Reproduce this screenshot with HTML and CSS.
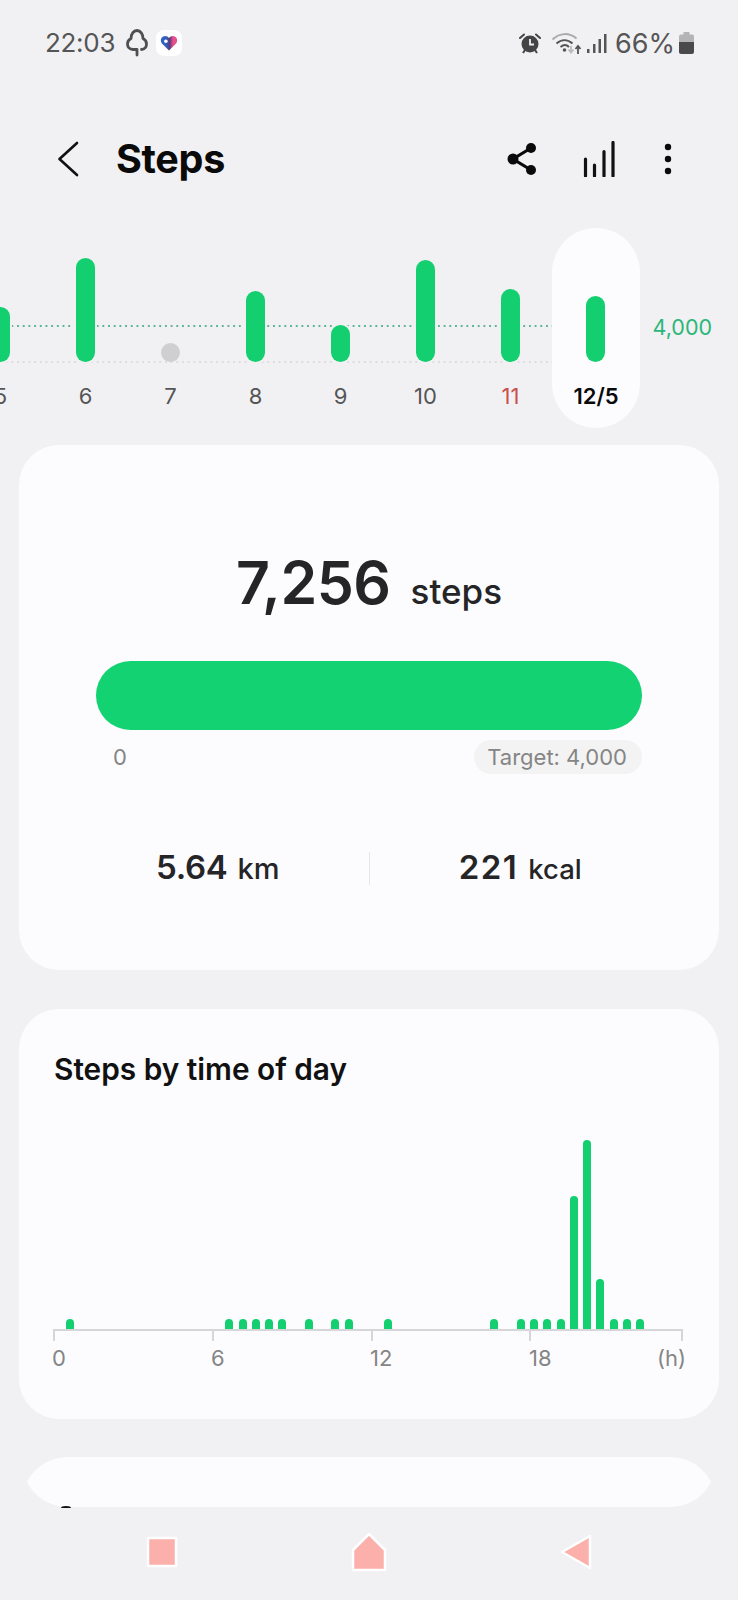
FILE: index.html
```html
<!DOCTYPE html>
<html lang="en">
<head>
<meta charset="utf-8">
<title>Steps</title>
<link rel="stylesheet" href="styles.css">
</head>
<body>
<div class="screen">
  <div class="status">
    <span class="clock">22:03</span>
    <svg class="ico-tree" width="22" height="28" viewBox="0 0 22 28" fill="none" stroke="#4f4f51" stroke-width="2.800" stroke-linecap="round" stroke-linejoin="round"><path d="M11 26V20.500H7C3.500 20.500 1.500 18 1.500 15 1.500 12.500 3 10.500 5 9.500 5 5 7.500 1.500 11 1.500S17 5 17 9.500C19 10.500 20.500 12.500 20.500 15 20.500 18 18.500 20.500 15.500 20.500"/></svg>
    <span class="app-badge">
      <svg width="18" height="16" viewBox="0 0 20 18"><defs><linearGradient id="hg" x1="0" y1="0" x2="1" y2="0"><stop offset="0.3" stop-color="#2f62c4"/><stop offset="0.55" stop-color="#5b3a78"/><stop offset="0.75" stop-color="#e8508c"/></linearGradient></defs><path d="M10 17.500 2 9.500C-.5 6.500 1 1 5.500 1 7.500 1 9 2 10 3.500 11 2 12.500 1 14.500 1 19 1 20.500 6.500 18 9.500Z" fill="url(#hg)"/><circle cx="6.500" cy="7" r="2" fill="#fff"/></svg>
    </span>
    <span class="status-right">
      <svg width="22" height="21" viewBox="0 0 22 21"><path d="M1 5 5 1.500M21 5l-4-3.500" stroke="#444" stroke-width="2" stroke-linecap="round"/><path d="M4 20l2-3M18 20l-2-3" stroke="#444" stroke-width="2"/><circle cx="11" cy="11" r="8.500" fill="#444"/><path d="M11 6v5.500h4" fill="none" stroke="#f1f1f3" stroke-width="1.800"/></svg>
      <svg class="ico-wifi" width="31" height="23" viewBox="0 0 31 23" fill="none"><path d="M1.500 7.500C9 .5 18 .5 25.500 6.500" stroke="#aaa" stroke-width="2"/><path d="M5.500 11.500c5-4.500 11-4.500 16 0M9.500 15c3-2.500 6-2.500 8.500 0" stroke="#555" stroke-width="2"/><circle cx="13.500" cy="18" r="1.800" fill="#555"/><path d="M20 14v6M17.500 17.500l2.500 3 2.500-3" stroke="#bbb" stroke-width="1.800"/><path d="M27 22v-7M24.500 17l2.500-3 2.500 3" stroke="#555" stroke-width="1.800"/></svg>
      <svg class="ico-signal" width="20" height="21" viewBox="0 0 20 21" fill="#555"><rect x="0" y="16" width="2.500" height="4"/><rect x="6" y="11" width="2.500" height="9"/><rect x="11.500" y="6" width="2.500" height="14"/><rect x="17" y="1" width="2.500" height="19"/></svg>
      <span class="batt-text">66%</span>
      <svg class="ico-batt" width="15" height="22" viewBox="0 0 15 22"><path d="M4.500 0h6v2.500h2.500a2 2 0 0 1 2 2V10H0V4.500a2 2 0 0 1 2-2h2.500Z" fill="#b4b4b6"/><path d="M0 10h15v10a2 2 0 0 1-2 2H2a2 2 0 0 1-2-2Z" fill="#4a4a4c"/></svg>
    </span>
  </div>

  <header class="appbar">
    <svg class="ico-back" width="22" height="36" viewBox="0 0 22 36" fill="none" stroke="#111" stroke-width="2.600" stroke-linecap="round" stroke-linejoin="round"><path d="M20 2 2.500 18 20 34"/></svg>
    <h1 class="title">Steps</h1>
    <span class="actions">
      <svg class="ico-share" width="30" height="34" viewBox="0 0 30 34" fill="none"><path d="M24 6 6 17l18 11" stroke="#0a0a0a" stroke-width="3.200"/><circle cx="24" cy="6" r="5" fill="#0a0a0a"/><circle cx="6" cy="17" r="5.500" fill="#0a0a0a"/><circle cx="24" cy="28" r="5" fill="#0a0a0a"/></svg>
      <svg class="ico-stats" width="32" height="36" viewBox="0 0 32 36" stroke="#111" stroke-width="3.200" stroke-linecap="round"><path d="M2.500 35V18M11.500 35V24M21 35V10.500M30 35V1.500"/></svg>
      <svg class="ico-more" width="8" height="32" viewBox="0 0 8 32" fill="#0a0a0a"><circle cx="4" cy="4" r="3.200"/><circle cx="4" cy="16" r="3.200"/><circle cx="4" cy="28" r="3.200"/></svg>
    </span>
  </header>

  <section class="week">
    <div class="line line-goal"></div>
    <div class="line line-zero"></div>
    <div class="days">
      <div class="day"><div class="slot"><span class="pill-bar" style="height:55px"></span></div><span class="day-label">5</span></div>
      <div class="day"><div class="slot"><span class="pill-bar" style="height:104px"></span></div><span class="day-label">6</span></div>
      <div class="day"><div class="slot"><span class="dot-bar"></span></div><span class="day-label">7</span></div>
      <div class="day"><div class="slot"><span class="pill-bar" style="height:71px"></span></div><span class="day-label">8</span></div>
      <div class="day"><div class="slot"><span class="pill-bar" style="height:37px"></span></div><span class="day-label">9</span></div>
      <div class="day"><div class="slot"><span class="pill-bar" style="height:102px"></span></div><span class="day-label">10</span></div>
      <div class="day"><div class="slot"><span class="pill-bar" style="height:73px"></span></div><span class="day-label day-sun">11</span></div>
      <div class="day day-now"><div class="slot"><span class="pill-bar" style="height:66px"></span></div><span class="day-label day-label-now">12/5</span></div>
    </div>
    <span class="goal-label">4,000</span>
  </section>

  <section class="card card-summary">
    <div class="total"><span class="total-num">7,256</span><span class="total-unit">steps</span></div>
    <div class="progress"></div>
    <div class="scale"><span class="scale-zero">0</span><span class="target">Target: 4,000</span></div>
    <div class="stats">
      <div class="stat"><span class="stat-num">5.64</span><span class="stat-unit">km</span></div>
      <div class="stat-sep"></div>
      <div class="stat stat-kcal"><span class="stat-num">221</span><span class="stat-unit">kcal</span></div>
    </div>
  </section>

  <section class="card card-hours">
    <h2 class="card-title">Steps by time of day</h2>
    <div class="plot">
      <span class="hbar" style="grid-column:1;height:10px"></span>
      <span class="hbar" style="grid-column:13;height:10px"></span>
      <span class="hbar" style="grid-column:14;height:10px"></span>
      <span class="hbar" style="grid-column:15;height:10px"></span>
      <span class="hbar" style="grid-column:16;height:10px"></span>
      <span class="hbar" style="grid-column:17;height:10px"></span>
      <span class="hbar" style="grid-column:19;height:10px"></span>
      <span class="hbar" style="grid-column:21;height:10px"></span>
      <span class="hbar" style="grid-column:22;height:10px"></span>
      <span class="hbar" style="grid-column:25;height:10px"></span>
      <span class="hbar" style="grid-column:33;height:10px"></span>
      <span class="hbar" style="grid-column:35;height:10px"></span>
      <span class="hbar" style="grid-column:36;height:10px"></span>
      <span class="hbar" style="grid-column:37;height:10px"></span>
      <span class="hbar" style="grid-column:38;height:10px"></span>
      <span class="hbar" style="grid-column:39;height:133px"></span>
      <span class="hbar" style="grid-column:40;height:189px"></span>
      <span class="hbar" style="grid-column:41;height:50px"></span>
      <span class="hbar" style="grid-column:42;height:10px"></span>
      <span class="hbar" style="grid-column:43;height:10px"></span>
      <span class="hbar" style="grid-column:44;height:10px"></span>
    </div>
    <div class="axis">
      <span class="tick tick-shift">0</span>
      <span class="tick tick-shift">6</span>
      <span class="tick tick-shift">12</span>
      <span class="tick tick-last"><span>18</span><span class="tick-unit">(h)</span></span>
    </div>
  </section>

  <section class="card-peek"><span class="peek-arc"></span></section>

  <nav class="navbar">
    <span class="nav-item"><svg width="32" height="32" viewBox="0 0 32 32"><rect x="2" y="2" width="28" height="28" fill="#fbb0ab" stroke="#fff" stroke-width="2.500" stroke-linejoin="round"/></svg></span>
    <span class="nav-item"><svg width="36" height="40" viewBox="0 0 36 40"><path d="M18 2 34 18V38H2V18Z" fill="#fbb0ab" stroke="#fff" stroke-width="2.500" stroke-linejoin="round"/></svg></span>
    <span class="nav-item"><svg width="34" height="36" viewBox="0 0 34 36"><path d="M31 2V34L3 18Z" fill="#fbb0ab" stroke="#fff" stroke-width="2.500" stroke-linejoin="round"/></svg></span>
  </nav>
</div>
</body>
</html>
```

FILE: styles.css
```css
* { box-sizing: border-box; }
html, body { margin: 0; padding: 0; }
body { background: #f1f1f3; font-family: Inter, "Noto Sans", "Liberation Sans", sans-serif; }
h1, h2 { margin: 0; }

.screen { width: 738px; height: 1600px; overflow: hidden; display: flex; flex-direction: column; background: #f1f1f3; }

.status { height: 86px; flex: none; display: flex; align-items: center; padding: 0 44px 0 45px; color: #555; }
.clock { font-size: 26px; letter-spacing: -0.3px; line-height: 30px; padding-bottom: 1px; }
.ico-tree { margin-left: 11px; }
.app-badge { width: 26px; height: 26px; margin-left: 8px; border-radius: 8px; background: #fff; display: flex; align-items: center; justify-content: center; }
.status-right { margin-left: auto; display: flex; align-items: center; }
.ico-wifi { margin-left: 10px; }
.ico-signal { margin-left: 5px; }
.batt-text { font-size: 27px; margin-left: 8px; }
.ico-batt { margin-left: 4px; }

.appbar { height: 142px; flex: none; display: flex; align-items: center; padding: 3px 0 0 57px; }
.title { font-size: 39.5px; font-weight: 700; color: #0a0a0a; margin-left: 37px; letter-spacing: -0.3px; }
.actions { margin-left: auto; display: flex; align-items: center; padding-right: 66px; }
.ico-stats { margin-left: 46px; }
.ico-more { margin-left: 49px; }

.week { position: relative; height: 200px; flex: none; display: flex; overflow: hidden; }
.line { position: absolute; left: 0; width: 552px; height: 2px; background-size: 5.7px 2px; background-repeat: repeat-x; }
.line-goal { top: 97px; background-image: linear-gradient(90deg, #5cb592 2px, transparent 2px); }
.line-zero { top: 133px; background-image: linear-gradient(90deg, #dcdcde 2px, transparent 2px); }
.days { position: relative; display: flex; margin-left: -42.5px; }
.day { width: 85px; display: flex; flex-direction: column; align-items: center; }
.slot { height: 134px; display: flex; align-items: flex-end; }
.pill-bar { display: block; width: 19px; border-radius: 10px; background: #13cf6f; box-shadow: 0 0 0 2px #f1f1f3; }
.dot-bar { display: block; width: 19px; height: 19px; border-radius: 50%; background: #cfcfd1; }
.day-label { margin-top: 21px; padding-left: 1px; font-size: 22px; line-height: 26px; color: #555; }
.day-sun { color: #c9504d; }
.day-now { width: 88px; margin-left: -1px; height: 200px; border-radius: 44px; background: #fcfcfe; }
.day-now .pill-bar { box-shadow: none; }
.day-label-now { color: #0a0a0a; font-weight: 600; }
.goal-label { margin: 86px 0 0 13px; font-size: 21.5px; line-height: 26px; color: #2cb67a; }

.card { flex: none; margin: 0 19px; background: #fcfcfe; border-radius: 40px; }

.card-summary { height: 525px; margin-top: 17px; padding: 100px 77px 0; }
.total { height: 76px; display: flex; align-items: baseline; justify-content: center; color: #252527; line-height: 76px; }
.total-num { font-size: 59px; font-weight: 600; letter-spacing: -0.5px; }
.total-unit { font-size: 35px; font-weight: 500; margin-left: 20px; }
.progress { height: 69px; margin-top: 40px; border-radius: 35px; background: #13d272; }
.scale { height: 34px; margin-top: 10px; display: flex; align-items: center; justify-content: space-between; padding: 0 0 0 17px; font-size: 22px; color: #858585; }
.target { height: 34px; display: flex; align-items: center; padding: 0 15px 0 13px; border-radius: 17px; background: #f3f3f4; }
.stats { margin: 78px -29px 0; height: 31px; display: grid; grid-template-columns: 1fr 1px 1fr; }
.stat { display: flex; align-items: baseline; justify-content: center; color: #252527; line-height: 31px; }
.stat-num { font-size: 33px; font-weight: 600; letter-spacing: -0.3px; }
.stat-unit { font-size: 29px; font-weight: 500; margin-left: 10px; }
.stat-kcal .stat-num { letter-spacing: 1.5px; }
.stat-kcal .stat-unit { font-size: 27.5px; }
.stat-sep { background: #e6e6e8; }

.card-hours { height: 410px; margin-top: 39px; padding: 40px 0 0 34px; }
.card-title { font-size: 29.8px; line-height: 40px; font-weight: 600; color: #111; margin-left: 1px; }
.plot { height: 189px; margin-top: 51px; padding-left: 10.7px; display: grid; grid-template-columns: repeat(48, 13.25px); align-items: end; justify-items: center; }
.hbar { display: block; width: 8px; border-radius: 4px 4px 0 0; background: #13cf6f; }
.axis { width: 630px; display: grid; grid-template-columns: 159px 159px 158px 154px; border-top: 2px solid #d6d6d8; font-size: 22px; line-height: 26px; color: #858585; }
.tick { padding-top: 14px; position: relative; }
.tick-shift { text-indent: -1px; }
.tick-unit { margin-right: -3px; }
.tick::before { content: ""; position: absolute; left: 0; top: 0; width: 2px; height: 10px; background: #d6d6d8; }
.tick-last { display: flex; justify-content: space-between; }
.tick-last::after { content: ""; position: absolute; right: 0; top: 0; width: 2px; height: 10px; background: #d6d6d8; }

.card-peek { position: relative; flex: none; height: 50px; margin: 38px 27px 0; }
.card-peek::before { content: ""; position: absolute; inset: 0; background: #fcfcfe; clip-path: path("M43 0H641C662 0 676 10 684 25 676 40 662 50 641 50H43C22 50 8 40 0 25 8 10 22 0 43 0Z"); }
.peek-arc { position: absolute; left: 34px; top: 49px; width: 10px; height: 4px; border-top: 2px solid #111; border-radius: 50%; }

.navbar { flex: none; margin-top: 25px; display: flex; justify-content: center; align-items: center; height: 40px; }
.nav-item { width: 207px; display: flex; justify-content: center; }
```
